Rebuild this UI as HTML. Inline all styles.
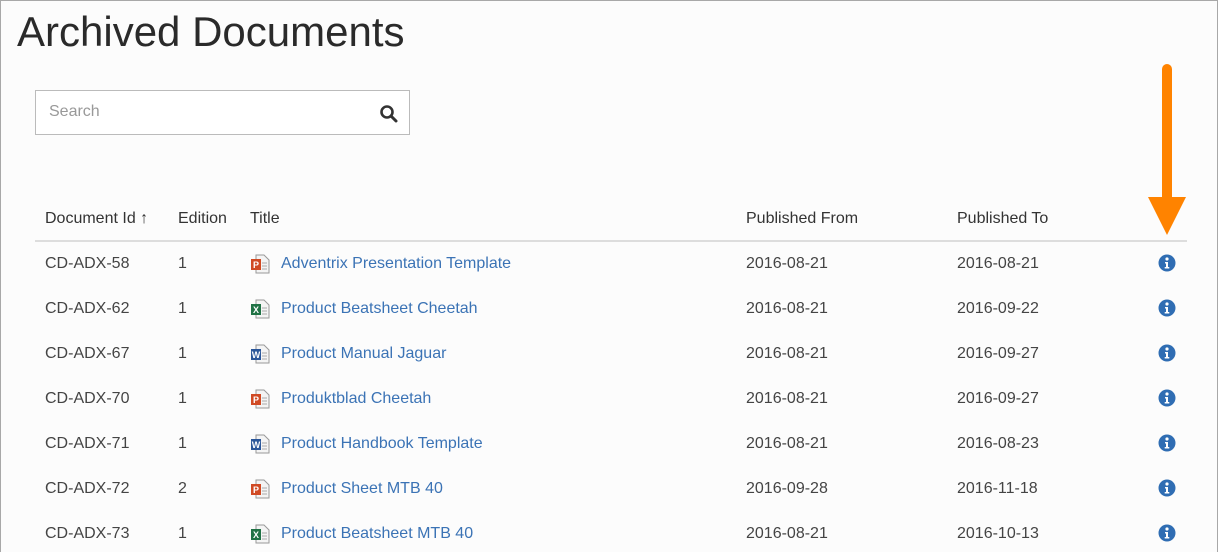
<!DOCTYPE html>
<html style="overflow:hidden;width:1218px;height:552px"><head><style>
*{margin:0;padding:0;box-sizing:border-box}
body{width:1218px;height:552px;overflow:hidden;background:#fcfcfc;font-family:"Liberation Sans",sans-serif;color:#3a3a3a;position:relative}
.frame{position:absolute;left:0;top:0;width:1218px;height:552px;border:1px solid #a8a8a8;border-bottom:none}
h1{position:absolute;left:17px;top:8px;font-size:42px;font-weight:normal;color:#2a2a2a;letter-spacing:0px}
.search{position:absolute;left:35px;top:90px;width:375px;height:45px;border:1px solid #bbb;background:#fff}
.search span{position:absolute;left:13px;top:12px;font-size:16px;color:#999}
.search svg{position:absolute;right:10px;top:13px}
.hdr{position:absolute;top:210px;font-size:16px;color:#333}
.line{position:absolute;left:35px;top:240px;width:1152px;height:2px;background:#ddd}
.c{position:absolute;font-size:16px;color:#444;line-height:20px}
.a{color:#3b73b5}
.fi{position:absolute;width:20px;height:20px}
</style></head><body>
<div class="frame"></div>
<h1>Archived Documents</h1>
<div class="search"><span>Search</span>
<svg width="20" height="20" viewBox="0 0 20 20"><circle cx="8" cy="8" r="5.5" fill="none" stroke="#333" stroke-width="2.6"/><line x1="12" y1="12" x2="17" y2="17" stroke="#333" stroke-width="3" stroke-linecap="round"/></svg></div>
<div class="hdr" style="left:45px">Document Id <b style="font-size:16px">&#8593;</b></div>
<div class="hdr" style="left:178px">Edition</div>
<div class="hdr" style="left:250px">Title</div>
<div class="hdr" style="left:746px">Published From</div>
<div class="hdr" style="left:957px">Published To</div>
<div class="line"></div>
<svg style="position:absolute;left:1145px;top:62px" width="44" height="175"><line x1="22" y1="7" x2="22" y2="140" stroke="#ff8300" stroke-width="10" stroke-linecap="round"/><polygon points="3,135 41,135 22,173" fill="#ff8300"/></svg>
<div id="rows"></div>
<script>
var d=[["CD-ADX-58","1","p","Adventrix Presentation Template","2016-08-21","2016-08-21"],
["CD-ADX-62","1","x","Product Beatsheet Cheetah","2016-08-21","2016-09-22"],
["CD-ADX-67","1","w","Product Manual Jaguar","2016-08-21","2016-09-27"],
["CD-ADX-70","1","p","Produktblad Cheetah","2016-08-21","2016-09-27"],
["CD-ADX-71","1","w","Product Handbook Template","2016-08-21","2016-08-23"],
["CD-ADX-72","2","p","Product Sheet MTB 40","2016-09-28","2016-11-18"],
["CD-ADX-73","1","x","Product Beatsheet MTB 40","2016-08-21","2016-10-13"]];
var col={p:"#d04a24",x:"#207245",w:"#2b579a"},L={p:"P",x:"X",w:"W"},h="";
d.forEach(function(r,i){var y=254+45*i;
h+='<div class="c" style="left:45px;top:'+y+'px">'+r[0]+'</div><div class="c" style="left:178px;top:'+y+'px">'+r[1]+'</div>';
h+='<svg class="fi" style="left:250px;top:'+(y)+'px" viewBox="0 0 20 20"><path d="M6 1h8l5 5v13H6z" fill="#f4f4f4" stroke="#999"/><line x1="12" y1="9" x2="17" y2="9" stroke="#aaa"/><line x1="12" y1="12" x2="17" y2="12" stroke="#aaa"/><line x1="12" y1="15" x2="17" y2="15" stroke="#aaa"/><rect x="1" y="5" width="10" height="11" fill="'+col[r[2]]+'"/><text x="6" y="14" font-size="9" font-weight="bold" fill="#fff" text-anchor="middle" font-family="Liberation Sans">'+L[r[2]]+'</text></svg>';
h+='<div class="c a" style="left:281px;top:'+y+'px">'+r[3]+'</div><div class="c" style="left:746px;top:'+y+'px">'+r[4]+'</div><div class="c" style="left:957px;top:'+y+'px">'+r[5]+'</div>';
h+='<svg style="position:absolute;left:1158px;top:'+(y)+'px" width="18" height="18" viewBox="0 0 18 18"><circle cx="9" cy="9" r="8.5" fill="#2f6db3"/><circle cx="9" cy="5" r="1.6" fill="#fff"/><path d="M7 8h3v5h1.3v1.5H6.7V13H8V9.5H7z" fill="#fff"/></svg>';});
document.getElementById("rows").innerHTML=h;
</script>
</body></html>
